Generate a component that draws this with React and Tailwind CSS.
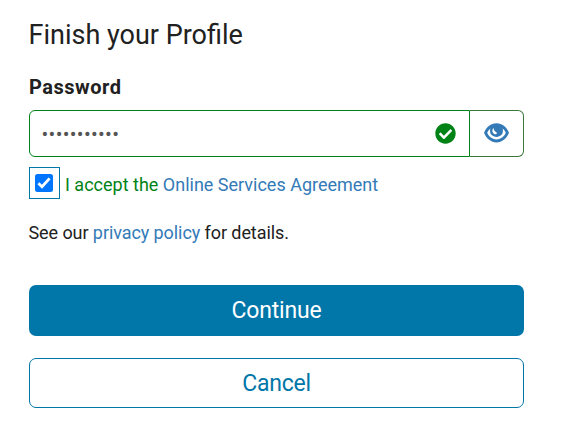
import React from "react";

function CheckCircle() {
  return (
    <svg className="h-[21px] w-[21px]" viewBox="0 0 512 512" fill="#008316" aria-hidden="true">
      <path d="M504 256c0 136.967-111.033 248-248 248S8 392.967 8 256 119.033 8 256 8s248 111.033 248 248zM227.314 387.314l184-184c6.248-6.248 6.248-16.379 0-22.627l-22.627-22.627c-6.248-6.249-16.379-6.249-22.628 0L216 308.118l-70.059-70.059c-6.248-6.248-16.379-6.248-22.628 0l-22.627 22.627c-6.248 6.248-6.248 16.379 0 22.627l104 104c6.249 6.249 16.379 6.249 22.628.001z" />
    </svg>
  );
}

function Eye() {
  return (
    <svg className="mb-[2px] h-[20px] w-[25px]" viewBox="0 0 25 20" aria-hidden="true">
      <path
        fill="#337ab7"
        fillRule="evenodd"
        d="M12.5 0.2C6.8 0.2 2.6 4 0.3 9Q0 9.8 0.3 10.6C2.6 15.6 6.8 19.4 12.5 19.4S22.4 15.6 24.7 10.6Q25 9.8 24.7 9C22.4 4 18.2 0.2 12.5 0.2ZM6.3 5.5C5.7 8.6 6.2 10.7 7.7 12.1C9 13.3 10.6 13.9 12.5 13.9S16 13.3 17.3 12.1C18.8 10.7 19.3 8.6 18.7 5.5C20.1 6.7 21.1 8.1 21.8 9.8C20 13.7 17 16.4 12.5 16.4S5 13.7 3.2 9.8C3.9 8.1 4.9 6.7 6.3 5.5ZM9.6 5C8.2 6.2 7.9 8.3 9.1 9.9C10 11.2 11.5 11.7 12.4 11.1C13.2 10.5 12.9 9.6 12 9.1C10.5 8.2 9.7 6.8 9.6 5Z"
      />
    </svg>
  );
}

export default function App() {
  return (
    <main className="h-[445px] w-[574px] bg-white pl-[29px] pt-[17px] font-['Roboto',sans-serif] text-[#212121]">
      <h1 className="-ml-[0.5px] h-9 text-[27px] leading-9 whitespace-nowrap">Finish your Profile</h1>
      <div className="mt-5 h-7 text-[20px] leading-7 font-bold tracking-[0.5px]">Password</div>
      <div className="mt-[9px] flex h-[47px] w-[495px]">
        <div className="flex w-[441px] items-center justify-between rounded-l-[6px] border border-[#008316] pr-[13px] pl-[11.5px]">
          <span className="text-[20px] leading-6 tracking-[0.32px] text-[#555]">•••••••••••</span>
          <CheckCircle />
        </div>
        <button className="flex w-[54px] items-center justify-center rounded-r-[6px] border border-l-0 border-[#3c763d]">
          <Eye />
        </button>
      </div>
      <div className="mt-[10px] flex h-8 items-center text-[18px]">
        <span className="flex h-8 w-[31px] items-center border border-[#0076a9] pl-[5px]">
          <span className="-mt-px flex h-[18px] w-[18px] items-center justify-center rounded-[2.5px] bg-[#0075ff]">
            <svg className="h-[18px] w-[18px]" viewBox="0 0 18 18" fill="none" stroke="white" strokeWidth="2.8" aria-hidden="true">
              <path d="M3.4 9.3L7 12.8L14.6 4.4" />
            </svg>
          </span>
        </span>
        <span className="ml-[5px] pt-[3px] whitespace-nowrap text-[#008316]">
          I accept the <a className="text-[#337ab7]">Online Services Agreement</a>
        </span>
      </div>
      <p className="-ml-[0.5px] mt-5 h-7 text-[18px] leading-7 tracking-[-0.08px]">
        See our <a className="text-[#337ab7]">privacy policy</a> for details.
      </p>
      <button className="mt-[38px] flex h-[51px] w-[495px] items-center justify-center rounded-[7px] bg-[#0076a9] pt-[2px] text-[23px] tracking-[-0.2px] text-white">
        Continue
      </button>
      <button className="mt-[22px] flex h-[50px] w-[495px] items-center justify-center rounded-[7px] border border-[#0076a9] pt-[2px] text-[23px] tracking-[-0.25px] text-[#0076a9]">
        Cancel
      </button>
    </main>
  );
}
